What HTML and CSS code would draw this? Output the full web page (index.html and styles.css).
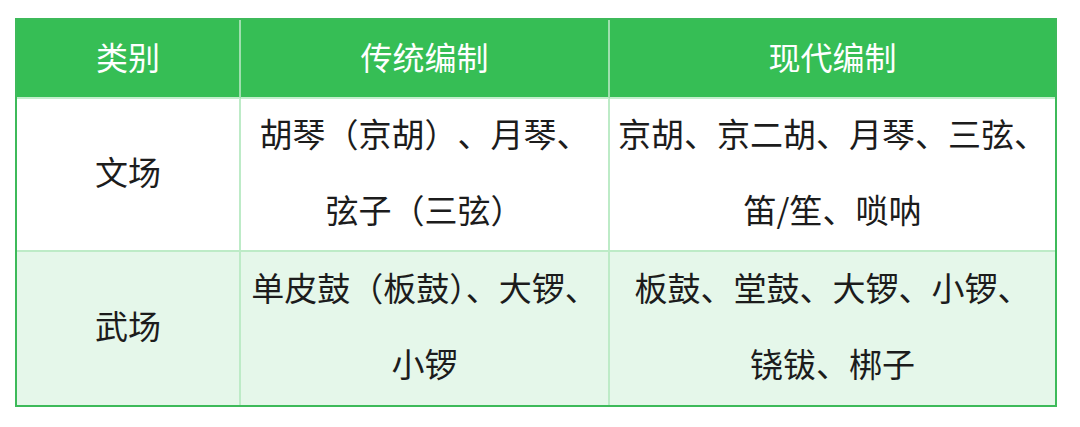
FILE: index.html
```html
<!DOCTYPE html>
<html lang="zh-CN">
<head>
<meta charset="utf-8">
<link rel="stylesheet" href="styles.css">
</head>
<body>
<div class="wrap">
  <div class="tbl">
    <div class="cell head">类别</div>
    <div class="cell head">传统编制</div>
    <div class="cell head last-col">现代编制</div>

    <div class="cell body">文场</div>
    <div class="cell body">胡琴（京胡）、月琴、<br>弦子（三弦）</div>
    <div class="cell body last-col">京胡、京二胡、月琴、三弦、<br>笛/笙、唢呐</div>

    <div class="cell body alt last-row">武场</div>
    <div class="cell body alt last-row trim">单皮鼓（板鼓）、大锣、<br>小锣</div>
    <div class="cell body alt last-row last-col">板鼓、堂鼓、大锣、小锣、<br>铙钹、梆子</div>
  </div>
</div>
</body>
</html>
```

FILE: styles.css
```css
html, body {
  margin: 0;
  padding: 0;
  background: #ffffff;
}
.wrap {
  padding: 18px 0 0 15px;
}
.tbl {
  box-sizing: border-box;
  width: 1042px;
  display: grid;
  grid-template-columns: 224px 369px 445px;
  grid-template-rows: 79px 153px 153px;
  border: 2px solid #3dba5a;
  font-family: "Noto Sans CJK SC", "Noto Sans", sans-serif;
  color: #1c1c1c;
  text-spacing-trim: space-all;
}
.cell {
  box-sizing: border-box;
  display: flex;
  align-items: center;
  justify-content: center;
  text-align: center;
  white-space: nowrap;
  border-right: 2px solid #bdebc7;
  border-bottom: 2px solid #bdebc7;
}
.cell.last-col { border-right: none; }
.cell.last-row { border-bottom: none; }
.head {
  background: #36be55;
  color: #ffffff;
  font-size: 32px;
  line-height: 40px;
  padding-bottom: 6px;
  border-right-color: #9fdfae;
  border-bottom-color: #c4eecd;
}
.body {
  background: #ffffff;
  font-size: 33px;
  line-height: 76px;
  padding-bottom: 8px;
}
.body.alt {
  background: #e5f7ea;
}
.body.trim {
  text-spacing-trim: normal;
}
```
